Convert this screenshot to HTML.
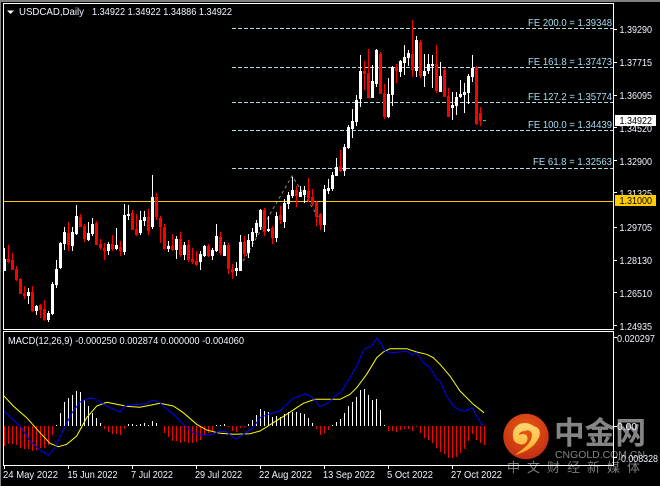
<!DOCTYPE html>
<html><head><meta charset="utf-8"><style>
html,body{margin:0;padding:0;background:#000;width:660px;height:486px;overflow:hidden}
svg{display:block}
text{font-family:"Liberation Sans",sans-serif;font-size:10.5px;fill:#f2f6ff}
.fe{fill:#a8dcf0}
.cjk{font-family:"Liberation Sans","Noto Sans CJK SC",sans-serif}
</style></head><body>
<svg id="s" xmlns="http://www.w3.org/2000/svg" width="660" height="486" viewBox="0 0 660 486">
<rect width="660" height="486" fill="#000"/>
<rect x="0" y="0" width="660" height="2" fill="#808080"/>
<rect x="0" y="0" width="1" height="486" fill="#808080"/>
<g id="under"></g>
<g stroke="#add8e6" stroke-dasharray="4 2" shape-rendering="crispEdges">
<path d="M232 28.5H613M232 67.5H613M232 102.5H613M232 130.5H613M232 168.5H613"/></g>
<path d="M243 261L292 176L321 221" fill="none" stroke="#8a8a8a" stroke-dasharray="3 3"/>
<rect x="4" y="201" width="609" height="1" fill="#ffcc00"/>
<g id="c" shape-rendering="crispEdges"></g>
<g id="h" shape-rendering="crispEdges"></g>
<polyline id="yl" fill="none" stroke="#ffff00" stroke-width="1"/>
<polyline id="bl" fill="none" stroke="#0000ff" stroke-width="1"/>
<!-- logo -->
<defs><radialGradient id="lg" cx="50%" cy="35%" r="65%"><stop offset="0" stop-color="#ea5a10"/><stop offset="1" stop-color="#c42f14"/></radialGradient>
<linearGradient id="yg" x1="0" y1="0" x2="0" y2="1"><stop offset="0" stop-color="#ffd774"/><stop offset=".6" stop-color="#fdc246"/><stop offset="1" stop-color="#f59a20"/></linearGradient></defs>
<circle cx="526" cy="436.5" r="22.7" fill="url(#lg)"/>
<path d="M513 436C512 428 519 422.500 525 423C530 423 533 426 536 427C541 429 540.500 436 538 439C534 447 526 452 515 455C522 449 531 445 532 435C532 431 528 429 525 431C521 431 519 433 519 435C523 433 527 434 527.500 437.500C528 442 524 446 519 444C515 443 513 440 513 436Z" fill="url(#yg)"/>
<text x="554" y="444" class="cjk" style="font-size:31px;font-weight:700;fill:#858585" textLength="92" lengthAdjust="spacingAndGlyphs">中金网</text>
<text x="555" y="458" style="font-size:10px;font-weight:400;fill:#858585" textLength="90" lengthAdjust="spacingAndGlyphs">CNGOLD.COM.CN</text>
<text x="507" y="472" class="cjk" style="font-size:13px;fill:#7c7c7c;letter-spacing:7px">中文财经新媒体</text>
<!-- frames -->
<g fill="#fff" shape-rendering="crispEdges">
<rect x="3" y="3" width="611" height="1"/><rect x="3" y="3" width="1" height="327"/><rect x="613" y="3" width="1" height="327"/><rect x="3" y="329" width="611" height="1"/>
<rect x="3" y="331" width="611" height="1"/><rect x="3" y="331" width="1" height="135"/><rect x="613" y="331" width="1" height="135"/><rect x="3" y="465" width="611" height="1"/>
<path d="M614 29h3v1h-3zM614 62h3v1h-3zM614 95h3v1h-3zM614 127h3v1h-3zM614 160h3v1h-3zM614 192h3v1h-3zM614 227h3v1h-3zM614 260h3v1h-3zM614 292h3v1h-3zM614 325h3v1h-3zM614 337h3v1h-3zM614 426h3v1h-3zM614 457h3v1h-3z"/>
<path d="M4 466h1v3h-1zM68 466h1v3h-1zM132 466h1v3h-1zM196 466h1v3h-1zM260 466h1v3h-1zM324 466h1v3h-1zM388 466h1v3h-1zM452 466h1v3h-1z"/>
</g>
<path d="M7 10.500h7l-3.500 3.500z" fill="#fff"/>
<text x="19" y="15" textLength="65" lengthAdjust="spacingAndGlyphs">USDCAD,Daily</text>
<text x="92" y="15" textLength="140" lengthAdjust="spacingAndGlyphs">1.34922 1.34922 1.34886 1.34922</text>
<g class="felabels">
<text class="fe" x="528" y="26" textLength="84" lengthAdjust="spacingAndGlyphs">FE 200.0 = 1.39348</text>
<text class="fe" x="528" y="65" textLength="84" lengthAdjust="spacingAndGlyphs">FE 161.8 = 1.37473</text>
<text class="fe" x="528" y="100" textLength="84" lengthAdjust="spacingAndGlyphs">FE 127.2 = 1.35774</text>
<text class="fe" x="528" y="128" textLength="84" lengthAdjust="spacingAndGlyphs">FE 100.0 = 1.34439</text>
<text class="fe" x="533" y="165" textLength="79" lengthAdjust="spacingAndGlyphs">FE 61.8 = 1.32563</text>
</g>
<g>
<text x="619.500" y="33" textLength="32.500" lengthAdjust="spacingAndGlyphs">1.39290</text>
<text x="619.500" y="66" textLength="32.500" lengthAdjust="spacingAndGlyphs">1.37715</text>
<text x="619.500" y="99" textLength="32.500" lengthAdjust="spacingAndGlyphs">1.36095</text>
<text x="619.500" y="132" textLength="32.500" lengthAdjust="spacingAndGlyphs">1.34520</text>
<text x="619.500" y="165" textLength="32.500" lengthAdjust="spacingAndGlyphs">1.32900</text>
<text x="619.500" y="197" textLength="32.500" lengthAdjust="spacingAndGlyphs">1.31325</text>
<text x="619.500" y="231" textLength="32.500" lengthAdjust="spacingAndGlyphs">1.29705</text>
<text x="619.500" y="264" textLength="32.500" lengthAdjust="spacingAndGlyphs">1.28130</text>
<text x="619.500" y="297" textLength="32.500" lengthAdjust="spacingAndGlyphs">1.26510</text>
<text x="619.500" y="330" textLength="32.500" lengthAdjust="spacingAndGlyphs">1.24935</text>
</g>
<rect x="615" y="115" width="41" height="11" fill="#fff" shape-rendering="crispEdges"/>
<text x="619.500" y="124" style="fill:#000" textLength="32.500" lengthAdjust="spacingAndGlyphs">1.34922</text>
<rect x="615" y="195" width="41" height="11" fill="#ffcc00" shape-rendering="crispEdges"/>
<text x="619.500" y="204" style="fill:#000" textLength="32.500" lengthAdjust="spacingAndGlyphs">1.31000</text>
<text x="8" y="344" textLength="236" lengthAdjust="spacingAndGlyphs">MACD(12,26,9) -0.000250 0.002874 0.000000 -0.004060</text>
<text x="617" y="342" textLength="38" lengthAdjust="spacingAndGlyphs">0.020297</text>
<text x="617" y="430" textLength="20" lengthAdjust="spacingAndGlyphs">0.00</text>
<text x="618" y="462" textLength="40" lengthAdjust="spacingAndGlyphs">-0.008328</text>
<text x="3" y="478" textLength="55" lengthAdjust="spacingAndGlyphs">24 May 2022</text>
<text x="67.500" y="478" textLength="50" lengthAdjust="spacingAndGlyphs">15 Jun 2022</text>
<text x="131" y="478" textLength="42" lengthAdjust="spacingAndGlyphs">7 Jul 2022</text>
<text x="195" y="478" textLength="47" lengthAdjust="spacingAndGlyphs">29 Jul 2022</text>
<text x="259" y="478" textLength="53" lengthAdjust="spacingAndGlyphs">22 Aug 2022</text>
<text x="323" y="478" textLength="52" lengthAdjust="spacingAndGlyphs">13 Sep 2022</text>
<text x="387" y="478" textLength="46" lengthAdjust="spacingAndGlyphs">5 Oct 2022</text>
<text x="451" y="478" textLength="51" lengthAdjust="spacingAndGlyphs">27 Oct 2022</text>
</svg>
<script>
var A="W250,282,318,318 R240,282,290,294 R264,285,315,316 R304,312,345,348 R340,342,387,388 R363,384,394,402 W370,381,393,416 R364,381,438,442 W420,423,438,450 R418,420,435,460 R405,432,465,468 W438,444,465,470 W352,357,447,450 W285,312,360,368 W232,234,309,312 W186,201,237,255 R171,204,240,258 W186,201,243,258 W120,153,207,210 R148,156,186,186 R178,183,222,231 W171,204,225,228 W159,177,207,213 R168,174,240,240 R222,237,249,255 R234,249,258,285 W231,237,258,270 R210,237,252,258 W189,240,252,255 R228,246,258,273 W117,150,262,270 W120,147,153,165 R135,144,195,195 R147,192,210,213 W138,165,204,210 W138,156,168,183 R132,156,198,210 W30,96,186,192 R84,96,156,165 R153,159,186,234 R177,186,252,255 W228,243,252,262 R207,243,255,258 W213,222,255,282 R201,222,270,276 W231,240,270,285 R225,240,285,291 R249,282,291,297 R258,288,300,303 W259,267,291,315 W240,243,273,276 R237,243,273,276 W249,255,273,285 W177,213,258,260 R201,216,264,270 W231,240,273,273 R235,240,312,327 R297,312,321,342 W291,309,318,333 W210,231,318,318 R213,231,267,276 W207,225,264,279 W189,201,228,246 W165,174,204,216 W132,135,186,195 R129,135,201,213 W153,192,198,201 R183,189,219,237 W141,153,219,231 R123,150,165,177 W102,114,171,189 W81,90,117,132 W36,75,93,99 R63,75,93,126 W63,81,96,96 W63,75,90,114 R39,78,99,111 R72,96,117,123 R108,111,156,183 R144,147,180,195 W60,72,180,201 W42,69,78,87 W21,30,72,78 W-21,6,33,33 R-45,3,18,21 W-63,-54,18,33".split(" ");
var B="W375,381,444,447 W327,363,387,414 W285,300,366,378 W165,213,297,321 R183,213,222,270 R147,219,294,294 W195,243,294,294 W147,150,252,261 R156,162,282,282 R252,279,351,357 W234,282,351,354 W198,201,285,318 R192,201,213,249 W180,183,216,231 W135,171,189,225 W150,159,174,198 R60,162,210,231 W108,120,213,231 R120,126,228,234 W162,213,228,261 W162,192,213,222 W165,192,198,264 R135,192,273,279 W186,228,276,276 R204,210,291,291 R264,288,352,352 W276,315,324,360 W276,291,318,345 W240,282,291,294 W249,276,285,339 W222,228,279,312 W165,204,231,246 R198,201,372,375 R321,339,363,378".split(" ");
var c="",i=0;
function add(a,off){a.forEach(function(d){var col=d[0]=="W"?"#fff":"#f00",v=d.slice(1).split(",").map(function(n){return Math.round(+n/3)+off});var x=4+4*i;
c+='<rect x="'+x+'" y="'+v[0]+'" width="1" height="'+Math.max(1,v[3]-v[0])+'" fill="'+col+'"/><rect x="'+(x-1)+'" y="'+v[1]+'" width="3" height="'+Math.max(1,v[2]-v[1])+'" fill="'+col+'"/>';i++;});}
add(A,165);add(B,0);
c+='<rect x="483" y="120" width="3" height="1" fill="#0f0"/>';
document.getElementById("c").innerHTML=c;
var H=[360,355,355,358,366,368,370,375,372,365,366,358,328,298,260,228,215,207,195,198,222,240,262,276,292,308,318,324,325,327,308,294,294,297,295,292,297,285,291,300,322,334,345,345,351,349,351,351,348,342,328,320,315,298,296,294,303,314,318,305,303,295,282,267,249,255,258,272,270,272,264,258,258,258,262,264,276,290,308,326,322,312,297,288,278,260,240,228,212,192,188,207,222,218,252,296,316,316,318,312,310,310,316,303,322,336,342,350,366,378,385,396,396,392,382,368,346,324,342,352,358];
var h="";H.forEach(function(z,k){var y=Math.round(z/3)+326,x=4+4*k;if(z==300)return;var t=Math.min(y,426),b=Math.max(y,426);h+='<rect x="'+x+'" y="'+t+'" width="1" height="'+Math.max(1,b-t)+'" fill="'+(z<300?"#fff":"#f00")+'"/>';});
document.getElementById("h").innerHTML=h;
function pts(sets){var o=[];sets.forEach(function(s){var a=s[1];for(var j=0;j<a.length;j+=2)o.push((a[j]/3+s[0]).toFixed(1)+","+(a[j+1]/3+326).toFixed(1));});return o.join(" ");}
document.getElementById("bl").setAttribute("points",pts([[0,[12,255,30,272,60,300,90,345,120,372,145,388,165,365,190,312,215,262,240,228,262,218,280,216,300,228,330,245,360,258,375,240,400,236,440,233,450,226,460,222,480,230,495,245,520,265,550,295,580,320,600,326,630,327]],[220,[0,316,20,318,48,340,70,325,100,305,120,275,145,265,180,255,195,240,220,217,255,204,275,212,300,242,325,230,345,210,362,200,390,155,410,120,432,70,455,60,470,37,480,48,495,75,510,80,560,76,578,87,590,80,610,110,630,125,650,160]],[440,[0,165,20,210,40,240,60,253,75,255,97,245,110,270,125,295,132,300]]]));
document.getElementById("yl").setAttribute("points",pts([[0,[12,210,40,240,80,275,120,320,150,352,175,362,200,355,230,330,260,275,290,240,320,229,350,235,380,241,420,244,450,238,480,232,520,240,550,260,590,295,620,312]],[220,[0,322,40,325,90,323,120,315,160,290,200,265,250,232,285,220,360,220,390,205,410,185,440,145,470,95,490,78,510,68,560,68,590,78,620,85,640,95]],[440,[0,115,30,150,60,195,100,235,132,260]]]));
</script>
</body></html>
